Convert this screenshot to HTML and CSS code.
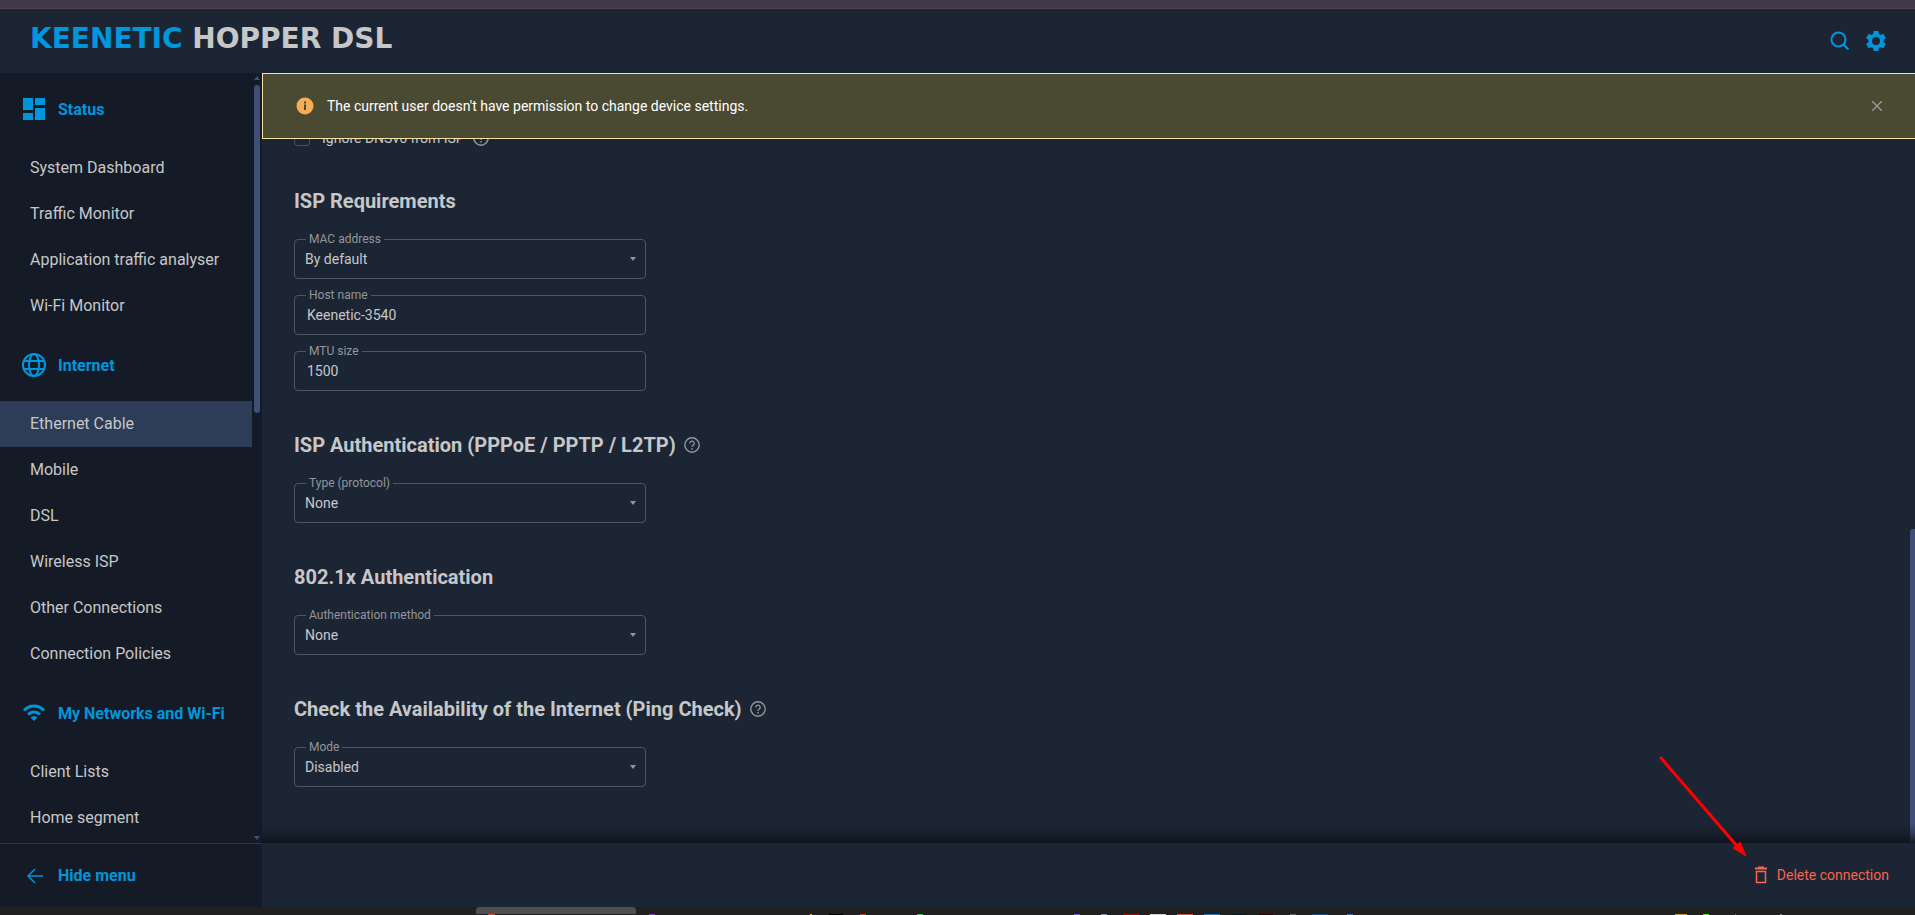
FILE: index.html
```html
<!DOCTYPE html>
<html lang="en">

<head>
    <meta charset="UTF-8">
    <meta name="viewport" content="width=device-width, initial-scale=1.0">
    <title>Keenetic Hopper DSL</title>
    <link rel="stylesheet" href="styles.css">
</head>

<body>
    <!-- Shared help icon -->
    <svg class="sprite" aria-hidden="true">
        <symbol id="help" viewBox="0 0 16 16">
            <circle cx="8" cy="8" r="7.2" fill="none" stroke="currentColor" stroke-width="1.4" />
            <path d="M5.8 6.4a2.2 2.2 0 1 1 3.3 1.9c-.7.4-1.1.8-1.1 1.6" fill="none" stroke="currentColor" stroke-width="1.3" />
            <circle cx="8" cy="11.8" r=".9" fill="currentColor" />
        </symbol>
    </svg>

    <div class="window-strip"></div>

    <header class="header">
        <a href="#" class="logo"><span class="brand">KEENETIC</span> HOPPER DSL</a>
        <div class="header-actions">
            <button type="button" aria-label="Search">
                <svg width="20" height="20" viewBox="0 0 20 20" fill="none" stroke="currentColor" stroke-width="2">
                    <circle cx="8.5" cy="8.5" r="7" />
                    <path d="M13.5 13.5L18.5 18.5" />
                </svg>
            </button>
            <button type="button" aria-label="Settings">
                <svg width="24" height="24" viewBox="0 0 24 24" fill="currentColor">
                    <path d="M19.43 12.98c.04-.32.07-.64.07-.98s-.03-.66-.07-.98l2.11-1.65c.19-.15.24-.42.12-.64l-2-3.46c-.12-.22-.39-.3-.61-.22l-2.49 1c-.52-.4-1.08-.73-1.69-.98l-.38-2.65C14.46 2.18 14.25 2 14 2h-4c-.25 0-.46.18-.49.42l-.38 2.65c-.61.25-1.17.59-1.69.98l-2.49-1c-.23-.09-.49 0-.61.22l-2 3.46c-.13.22-.07.49.12.64l2.11 1.65c-.04.32-.07.65-.07.98s.03.66.07.98l-2.11 1.65c-.19.15-.24.42-.12.64l2 3.46c.12.22.39.3.61.22l2.49-1c.52.4 1.08.73 1.69.98l.38 2.65c.03.24.24.42.49.42h4c.25 0 .46-.18.49-.42l.38-2.65c.61-.25 1.17-.59 1.69-.98l2.49 1c.23.09.49 0 .61-.22l2-3.46c.12-.22.07-.49-.12-.64l-2.11-1.65zM12 16a4 4 0 1 1 0-8 4 4 0 0 1 0 8z" />
                </svg>
            </button>
        </div>
    </header>

    <div class="layout">
        <aside class="sidebar">
            <nav class="menu">
                <h2>
                    <svg width="24" height="24" viewBox="0 0 24 24" fill="currentColor">
                        <path d="M1 1h10v12H1zM13 1h10v7H13zM1 16h10v7H1zM13 11h10v12H13z" />
                    </svg>
                    Status
                </h2>
                <a href="#">System Dashboard</a>
                <a href="#">Traffic Monitor</a>
                <a href="#">Application traffic analyser</a>
                <a href="#">Wi-Fi Monitor</a>
                <h2>
                    <svg width="24" height="24" viewBox="0 0 24 24" fill="none" stroke="currentColor" stroke-width="2">
                        <circle cx="12" cy="12" r="11" />
                        <ellipse cx="12" cy="12" rx="5" ry="11" />
                        <path d="M2 8h20M2 16h20" />
                    </svg>
                    Internet
                </h2>
                <a href="#" class="active">Ethernet Cable</a>
                <a href="#">Mobile</a>
                <a href="#">DSL</a>
                <a href="#">Wireless ISP</a>
                <a href="#">Other Connections</a>
                <a href="#">Connection Policies</a>
                <h2>
                    <svg width="24" height="24" viewBox="0 0 24 24" fill="none" stroke="currentColor" stroke-width="3">
                        <path d="M2 9.5C7.5 3.5 16.5 3.5 22 9.5" />
                        <path d="M6 13.5C9.5 10 14.5 10 18 13.5" />
                        <path d="M8.5 16.5Q12 13.5 15.5 16.5L12 20z" fill="currentColor" stroke="none" />
                    </svg>
                    My Networks and Wi-Fi
                </h2>
                <a href="#">Client Lists</a>
                <a href="#">Home segment</a>
            </nav>
            <div class="menu-scroll">
                <svg width="6" height="4" viewBox="0 0 6 4"><path d="M0 4L3 0L6 4z" fill="currentColor" /></svg>
                <div class="track">
                    <div class="thumb"></div>
                </div>
                <svg width="6" height="4" viewBox="0 0 6 4"><path d="M0 0L3 4L6 0z" fill="currentColor" /></svg>
            </div>
        </aside>

        <main class="content">
            <div class="alert" role="alert">
                <svg width="18" height="18" viewBox="0 0 18 18">
                    <circle cx="9" cy="9" r="8.5" fill="#f5ae55" />
                    <path d="M8 7.5h2V13H8zM8 4.5h2v2H8z" fill="#4a4a32" />
                </svg>
                <p>The current user doesn't have permission to change device settings.</p>
                <button type="button" aria-label="Close">
                    <svg width="10" height="10" viewBox="0 0 10 10" stroke="currentColor" stroke-width="1.5">
                        <path d="M0 0L10 10M10 0L0 10" />
                    </svg>
                </button>
            </div>

            <div class="check-row">
                <input type="checkbox" id="ignoreDns">
                <label for="ignoreDns">Ignore DNSv6 from ISP</label>
                <svg class="help" width="16" height="16"><use href="#help" /></svg>
            </div>

            <section>
                <h3>ISP Requirements</h3>
                <div class="field">
                    <label for="mac">MAC address</label>
                    <select id="mac">
                        <option>By default</option>
                    </select>
                </div>
                <div class="field">
                    <label for="host">Host name</label>
                    <input type="text" id="host" value="Keenetic-3540">
                </div>
                <div class="field">
                    <label for="mtu">MTU size</label>
                    <input type="text" id="mtu" value="1500">
                </div>
            </section>

            <section>
                <h3>ISP Authentication (PPPoE / PPTP / L2TP)
                    <svg class="help" width="16" height="16"><use href="#help" /></svg>
                </h3>
                <div class="field">
                    <label for="type">Type (protocol)</label>
                    <select id="type">
                        <option>None</option>
                    </select>
                </div>
            </section>

            <section>
                <h3>802.1x Authentication</h3>
                <div class="field">
                    <label for="method">Authentication method</label>
                    <select id="method">
                        <option>None</option>
                    </select>
                </div>
            </section>

            <section>
                <h3>Check the Availability of the Internet (Ping Check)
                    <svg class="help" width="16" height="16"><use href="#help" /></svg>
                </h3>
                <div class="field">
                    <label for="mode">Mode</label>
                    <select id="mode">
                        <option>Disabled</option>
                    </select>
                </div>
            </section>

            <div class="page-scroll"></div>
        </main>
    </div>

    <footer class="footer">
        <button type="button" class="hide-menu">
            <svg width="16" height="16" viewBox="0 0 16 16" fill="none" stroke="currentColor" stroke-width="1.5">
                <path d="M16 8H1M8 1L1 8L8 15" />
            </svg>
            Hide menu
        </button>
        <div class="footer-actions">
            <button type="button" class="delete">
                <svg width="14" height="18" viewBox="0 0 14 18" fill="none" stroke="currentColor">
                    <path d="M1 2.5H13M4 1.5H10" stroke-width="2" />
                    <path d="M2.5 5.5H11.5V16.5H2.5z" stroke-width="1.5" />
                </svg>
                Delete connection
            </button>
            <svg class="pointer" width="90" height="102" viewBox="0 0 90 102">
                <path d="M2 3L78 91" stroke="#f00" stroke-width="3" stroke-linecap="round" />
                <path d="M87 101L74 93L81 87z" fill="#f00" stroke="#f00" />
            </svg>
        </div>
    </footer>

    <div class="taskbar">
        <div class="task"></div>
        <!-- Top edges of the taskbar icons -->
        <svg class="task-icons" width="1310" height="1" viewBox="476 0 1310 1" aria-hidden="true">
            <path d="M488 0h7v1h-7z" fill="#d8442f" />
            <path d="M649 0h6v1h-6z" fill="#7a3fc0" />
            <path d="M810 0h2v1h-2z" fill="#e0c840" />
            <path d="M829 0h14v1h-14z" fill="#000" />
            <path d="M860 0h6v1h-6z" fill="#b8482a" />
            <path d="M917 0h6v1h-6z" fill="#3cc070" />
            <path d="M1074 0h6v1h-6z" fill="#6a5ad8" />
            <path d="M1101 0h6v1h-6z" fill="#8a929c" />
            <path d="M1123 0h16v1h-16z" fill="#a00808" />
            <path d="M1150 0h16v1h-16z" fill="#d0d0d0" />
            <path d="M1177 0h16v1h-16z" fill="#e04a3a" />
            <path d="M1204 0h16v1h-16z" fill="#1c7ab8" />
            <path d="M1232 0h14v1h-14z" fill="#0a1826" />
            <path d="M1259 0h14v1h-14z" fill="#300008" />
            <path d="M1290 0h6v1h-6z" fill="#666" />
            <path d="M1312 0h16v1h-16z" fill="#0e4c8a" />
            <path d="M1347 0h6v1h-6z" fill="#2a7aa8" />
            <path d="M1675 0h12v1h-12z" fill="#c8962a" />
            <path d="M1703 0h6v1h-6z" fill="#60e800" />
            <path d="M1735 0h1v1h-1z" fill="#7a5090" />
            <path d="M1780 0h2v1h-2z" fill="#888" />
        </svg>
    </div>
</body>

</html>
```

FILE: styles.css
```css
* {
    box-sizing: border-box;
}

body {
    display: flex;
    flex-direction: column;
    height: 100vh;
    margin: 0;
    overflow: hidden;
    font-family: Roboto, sans-serif;
    font-size: 14px;
    color: #c6c7c8;
    background-color: #1c2534;
}

button {
    display: flex;
    align-items: center;
    padding: 0;
    border: none;
    background: none;
    color: #0096dc;
    font-family: inherit;
    cursor: pointer;
}

a {
    color: inherit;
    text-decoration: none;
}

.sprite {
    display: none;
}

.window-strip {
    flex: none;
    height: 9px;
    background-color: #41384a;
    border-bottom: 1px solid #4b444f;
}

/* Header */
.header {
    display: flex;
    flex: none;
    align-items: center;
    justify-content: space-between;
    height: 64px;
    padding: 0 27px 0 30px;
}

.logo {
    font-family: "DejaVu Sans", sans-serif;
    font-size: 28px;
    font-weight: bold;
    line-height: 32px;
    padding-bottom: 4px;
}

.brand {
    color: #0096dc;
}

.header-actions {
    display: flex;
    align-items: center;
    gap: 14px;
}

/* Sidebar */
.layout {
    display: flex;
    flex: 1;
    min-height: 0;
}

.sidebar {
    display: flex;
    flex: none;
    width: 262px;
    background-color: #151b26;
}

.menu {
    width: 252px;
    overflow: hidden;
}

.menu h2 {
    display: flex;
    align-items: center;
    gap: 12px;
    height: 72px;
    margin: 0;
    padding-left: 22px;
    font-size: 16px;
    font-weight: 700;
    color: #0096dc;
}

.menu a {
    display: block;
    padding-left: 30px;
    font-size: 16px;
    line-height: 46px;
}

.menu a.active {
    background-color: #2d3c57;
}

.menu-scroll {
    display: flex;
    flex-direction: column;
    gap: 5px;
    padding: 3px 2px;
    color: #3f4f77;
}

.track {
    flex: 1;
}

.thumb {
    width: 6px;
    height: 44%;
    border-radius: 3px;
    background-color: #3f4f77;
}

/* Content */
.content {
    position: relative;
    flex: 1;
    padding: 56px 32px 0;
    overflow: hidden;
}

.content::after {
    content: "";
    position: absolute;
    right: 0;
    bottom: 0;
    left: 0;
    height: 20px;
    background: linear-gradient(transparent, rgba(14, 18, 26, 0.3) 50%, rgba(14, 18, 26, 0.9));
}

.alert {
    position: absolute;
    top: 0;
    right: 0;
    left: 0;
    display: flex;
    align-items: center;
    gap: 13px;
    height: 66px;
    padding: 0 33px;
    border: 1px solid #f3e2a2;
    border-right: none;
    background-color: #4a4a32;
    color: #fff;
    z-index: 1;
}

.alert p {
    flex: 1;
    margin: 0;
}

.alert button {
    color: #92969a;
}

.check-row {
    display: flex;
    align-items: center;
    height: 18px;
}

.check-row input {
    appearance: none;
    width: 16px;
    height: 16px;
    margin: 0 12px 0 0;
    border: 1px solid #3f4f77;
    border-radius: 3px;
}

.help {
    margin-left: 8px;
    color: #92969a;
}

section {
    margin-top: 41px;
}

section h3 {
    display: flex;
    align-items: center;
    height: 26px;
    margin: 0 0 25px;
    font-size: 20px;
    font-weight: 700;
}

.field {
    position: relative;
    width: 352px;
    margin-bottom: 16px;
}

.field label {
    position: absolute;
    top: -7px;
    left: 12px;
    padding: 0 3px;
    background-color: #1c2534;
    font-size: 12px;
    line-height: 14px;
    color: #92969a;
}

.field input,
.field select {
    display: block;
    appearance: none;
    width: 100%;
    height: 40px;
    padding: 0 12px;
    border: 1px solid #50565f;
    border-radius: 4px;
    background: none;
    color: inherit;
    font: inherit;
}

.field select {
    padding: 0 10px;
}

/* Drop-down arrow */
.field:has(select)::after {
    content: "";
    position: absolute;
    top: 18px;
    right: 10px;
    border: 3px solid transparent;
    border-top: 4px solid #92969a;
    border-bottom: none;
}

.page-scroll {
    position: absolute;
    right: 0;
    bottom: 0;
    width: 5px;
    height: 314px;
    border-top-left-radius: 3px;
    background-color: #3f4f77;
}

/* Footer */
.footer {
    display: flex;
    flex: none;
    height: 64px;
}

.hide-menu {
    gap: 15px;
    width: 262px;
    padding-left: 27px;
    border-top: 1px solid #33373f;
    background-color: #151b26;
    font-size: 16px;
    font-weight: 700;
}

.footer-actions {
    position: relative;
    display: flex;
    flex: 1;
    align-items: center;
    justify-content: flex-end;
    padding-right: 26px;
}

.delete {
    gap: 9px;
    color: #f9634f;
    font-size: 14px;
}

.pointer {
    position: absolute;
    right: 166px;
    bottom: 50px;
    z-index: 2;
}

.taskbar {
    flex: none;
    height: 8px;
    padding-left: 476px;
    overflow: hidden;
    background-color: #202020;
}

.task {
    width: 160px;
    height: 7px;
    border-radius: 4px 4px 0 0;
    background-color: #4f4f4f;
}

.task-icons {
    display: block;
}
```
